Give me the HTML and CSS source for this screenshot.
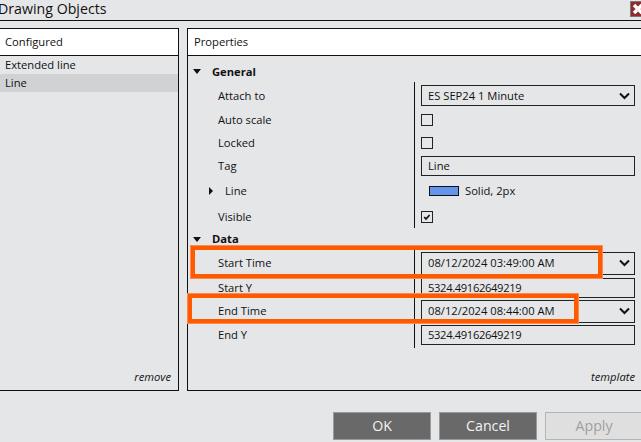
FILE: index.html
```html
<!DOCTYPE html>
<html lang="en">
<head>
<meta charset="utf-8">
<title>Drawing Objects</title>
<link rel="stylesheet" href="styles.css">
</head>
<body>
<div class="window">
  <header class="titlebar">
    <span class="title">Drawing Objects</span>
    <span class="close"><svg width="16" height="16" viewBox="0 0 16 16"><path d="M4 4l8 8M12 4l-8 8" stroke="#fff" stroke-width="3.4"/></svg></span>
  </header>
  <main class="panels">
    <section class="panel left">
      <div class="panel-head">Configured</div>
      <div class="list">
        <div class="item">Extended line</div>
        <div class="item selected">Line</div>
      </div>
      <div class="panel-foot">remove</div>
    </section>
    <section class="panel right">
      <div class="panel-head">Properties</div>
      <div class="grid">
        <div class="group-head general"><span class="tri-down"></span>General</div>
        <div class="group">
          <div class="row h27"><span class="label">Attach to</span><div class="value"><div class="field select">ES SEP24 1 Minute<svg class="chev" width="11" height="8" viewBox="0 0 11 8"><path d="M1 1.5l4.5 4.5L10 1.5" fill="none" stroke="#111" stroke-width="2"/></svg></div></div></div>
          <div class="row h22"><span class="label">Auto scale</span><div class="value"><span class="check"></span></div></div>
          <div class="row h24"><span class="label">Locked</span><div class="value"><span class="check"></span></div></div>
          <div class="row h22"><span class="label">Tag</span><div class="value"><div class="field text">Line</div></div></div>
          <div class="row h28"><span class="label sub"><span class="tri-right"></span>Line</span><div class="value stroke"><span class="swatch"></span>Solid, 2px</div></div>
          <div class="row h23"><span class="label">Visible</span><div class="value"><span class="check"><svg width="10" height="10" viewBox="0 0 10 10"><path d="M2.2 5l1.8 2L7.6 3" fill="none" stroke="#111" stroke-width="1.7"/></svg></span></div></div>
        </div>
        <div class="group-head data"><span class="tri-down"></span>Data</div>
        <div class="group">
          <div class="row h28"><span class="label">Start Time</span><div class="value"><div class="field select tall">08/12/2024 03:49:00 AM<svg class="chev" width="11" height="8" viewBox="0 0 11 8"><path d="M1 1.5l4.5 4.5L10 1.5" fill="none" stroke="#111" stroke-width="2"/></svg></div></div></div>
          <div class="row h21"><span class="label">Start Y</span><div class="value"><div class="field text num">5324.49162649219</div></div></div>
          <div class="row h26"><span class="label">End Time</span><div class="value"><div class="field select tall">08/12/2024 08:44:00 AM<svg class="chev" width="11" height="8" viewBox="0 0 11 8"><path d="M1 1.5l4.5 4.5L10 1.5" fill="none" stroke="#111" stroke-width="2"/></svg></div></div></div>
          <div class="row h24 end"><span class="label">End Y</span><div class="value"><div class="field text num">5324.49162649219</div></div></div>
        </div>
      </div>
      <div class="panel-foot">template</div>
    </section>
  </main>
  <footer class="buttons">
    <button class="btn">OK</button>
    <button class="btn">Cancel</button>
    <button class="btn disabled">Apply</button>
  </footer>
</div>
<div class="mark mark-start"></div>
<div class="mark mark-end"></div>
</body>
</html>
```
FILE: styles.css
```css
* { box-sizing: border-box; }
html, body { margin: 0; height: 100%; }
body {
  position: relative;
  width: 641px;
  height: 442px;
  overflow: hidden;
  background: #e5e6e8;
  color: #111;
  font-family: "Open Sans", "Noto Sans", sans-serif;
  font-size: 11.2px;
  line-height: 16px;
}
.window { display: flex; flex-direction: column; width: 641px; height: 442px; }
.titlebar {
  height: 21px;
  flex: none;
  border-bottom: 1px solid #111;
  display: flex;
  justify-content: space-between;
}
.title { font-size: 14.2px; line-height: 18px; margin-left: -2px; }
.close {
  width: 16px; height: 16px;
  margin: 1px -5px 0 0;
  background: #8f2a2d;
  border: 1px solid #777;
  display: block;
}
.close svg { display: block; margin: -1px; }
.panels { flex: none; display: flex; gap: 8px; height: 363px; margin: 7px 0 0 -1px; }
.panel { border: 1px solid #111; display: flex; flex-direction: column; height: 363px; flex: none; }
.panel.left { width: 180px; }
.panel.right { width: 470px; }
.panel-head {
  height: 27px; flex: none;
  background: #fff;
  border-bottom: 1px solid #111;
  padding: 5px 0 0 5px;
}
.right .panel-head { padding-left: 6px; }
.list { flex: 1; }
.item { height: 18px; padding: 1px 0 0 5px; }
.item.selected { background: #d1d2d3; }
.panel-foot { flex: none; height: 25px; font-style: italic; text-align: right; padding: 4px 7px 0 0; }
.right .panel-foot { padding-right: 21px; }
.grid { flex: 1; }
.group-head { font-weight: 700; display: flex; align-items: center; padding-left: 5px; }
.group-head.general { height: 26px; padding-top: 5px; }
.group-head.data { height: 21px; padding-top: 1px; }
.tri-down {
  width: 0; height: 0; margin-right: 10px;
  border-left: 4.5px solid transparent;
  border-right: 4.5px solid transparent;
  border-top: 5px solid #111;
}
.group-head .tri-down { margin-right: 10px; }
.group-head.general .tri-down { margin-right: 11px; }
.group-head.data .tri-down { margin-right: 11px; }
.tri-right {
  width: 0; height: 0; margin: 0 12px 0 -9px;
  border-top: 4px solid transparent;
  border-bottom: 4px solid transparent;
  border-left: 4px solid #111;
  display: inline-block;
}
.row { display: flex; align-items: center; }
.h21 { height: 21px; }
.h22 { height: 22px; }
.h23 { height: 23px; }
.h24 { height: 24px; }
.h26 { height: 26px; }
.h27 { height: 27px; }
.h28 { height: 28px; }
.row.end { padding-bottom: 2px; height: 24px; }
.row.end .value { margin-bottom: -2px; padding-bottom: 2px; }
.label { width: 226px; padding-left: 30px; flex: none; }
.label.sub { display: flex; align-items: center; }
.value {
  align-self: stretch;
  width: 221px;
  flex: none;
  border-left: 1px solid #111;
  padding-left: 6px;
  display: flex;
  align-items: center;
}
.field {
  flex: 1;
  border: 1px solid #222;
  height: 21px;
  padding-left: 6px;
  display: flex;
  align-items: center;
  justify-content: space-between;
}
.field.tall { height: 23px; }
.field.text { height: 20px; }
.field.num { letter-spacing: -0.35px; }
.chev { margin-right: 4px; }
.check {
  width: 12px; height: 12px;
  border: 1px solid #222;
  display: block;
}
.check svg { display: block; }
.stroke { padding-left: 14px; }
.swatch {
  width: 30px; height: 10px;
  background: #6495ed;
  border: 1px solid #111;
  margin-right: 6px;
}
.buttons { flex: none; display: flex; gap: 8px; margin: 21px 0 0 333px; width: 320px; }
.btn {
  width: 98px; height: 28px;
  background: #696969;
  border: 1.5px solid #9a9a9a;
  color: #f2f2f2;
  font: inherit;
  font-size: 14.2px;
  padding: 0;
  flex: none;
}
.btn.disabled { background: #dfdfdf; border-color: #b5b5b5; color: #a0a0a0; }
.mark {
  position: absolute;
  border: 5px solid #ff5a00;
  outline: 1px solid #f98a52;
  outline-offset: -1px;
  pointer-events: none;
}
.mark-start { left: 190px; top: 245px; width: 413px; height: 34px; }
.mark-end { left: 187px; top: 293px; width: 392px; height: 31px; }
```
